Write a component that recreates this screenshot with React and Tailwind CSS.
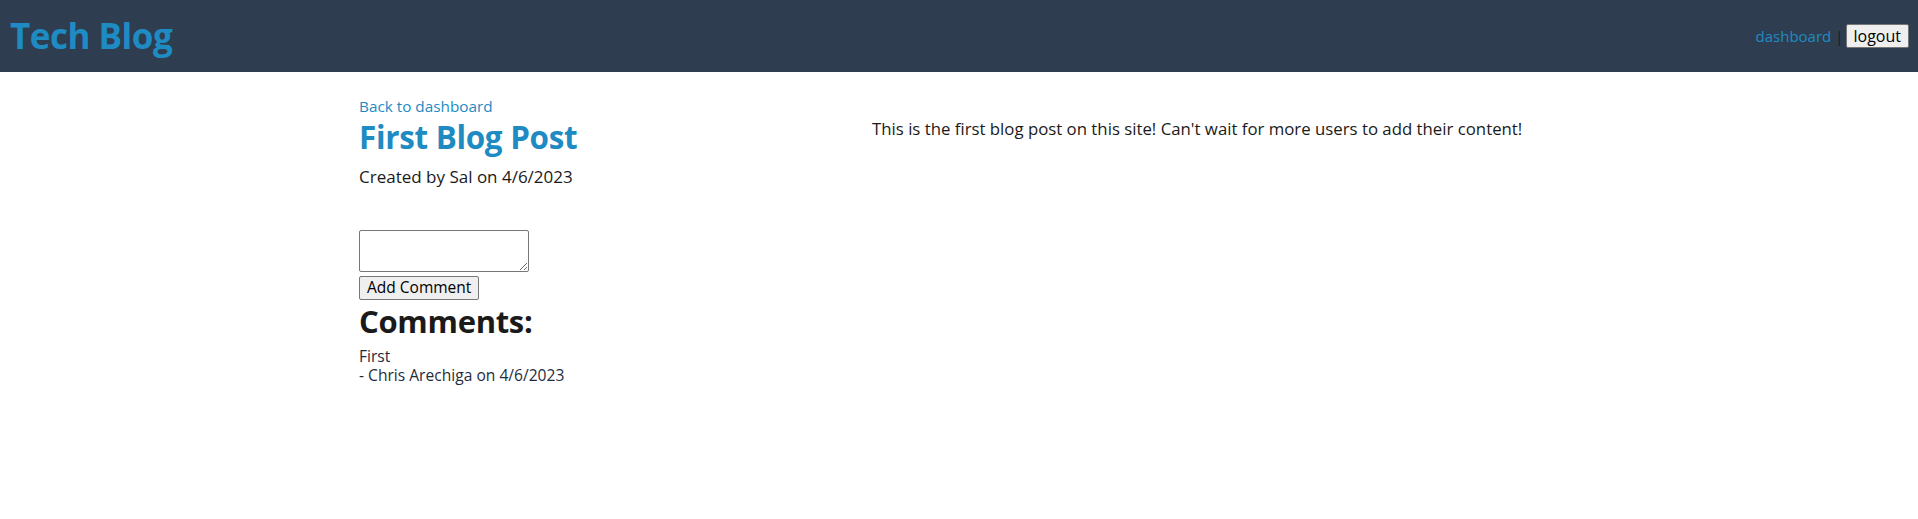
export default function App() {
  const font = { fontFamily: '"Open Sans", "Noto Sans", sans-serif' };
  return (
    <div className="min-h-[519px] bg-white text-[#1a1a1a]" style={font}>
      <header className="h-[72px] bg-[#2e3e50] flex items-center justify-between pl-[10px] pr-[9px]">
        <h1 className="text-[35px] font-bold text-[#1e8bc3] leading-none tracking-[-0.5px] -mt-[2px]">Tech Blog</h1>
        <nav className="flex items-center text-[15px]">
          <a className="text-[#1e8bc3]" href="#">dashboard</a>
          <span className="text-[#1a1a1a] ml-[4px] mr-[2px]">|</span>
          <button className="h-[24px] px-[7px] text-[16px] leading-none text-black bg-[#efefef] border border-[#767676] rounded-[2px]">logout</button>
        </nav>
      </header>
      <main className="w-[1200px] mx-auto flex">
        <section className="w-[513px] pt-[24px]">
          <a className="block text-[15.3px] leading-[20px] text-[#1e8bc3]" href="#">Back to dashboard</a>
          <h2 className="mt-[2px] text-[31.4px] font-bold leading-[38px] text-[#1e8bc3] tracking-[-0.3px]">First Blog Post</h2>
          <p className="mt-[10px] text-[17px] leading-[22px]">Created by Sal on 4/6/2023</p>
          <form className="mt-[42px] flex flex-col items-start gap-[4px]">
            <textarea className="w-[170px] h-[42px] border border-[#767676] rounded-[2px] bg-white" />
            <button type="button" className="h-[24px] px-[7px] text-[15.5px] leading-none text-black bg-[#efefef] border border-[#767676] rounded-[2px]">Add Comment</button>
          </form>
          <h3 className="mt-[2px] text-[31px] font-bold leading-[38px] text-[#1a1a1a] tracking-[-0.3px]">Comments:</h3>
          <div className="mt-[7px] text-[15.6px] leading-[19px] text-[#1f2d3d]">
            <p>First</p>
            <p>- Chris Arechiga on 4/6/2023</p>
          </div>
        </section>
        <section className="pt-[47px]">
          <p className="text-[16.8px] leading-[20px]">This is the first blog post on this site! Can't wait for more users to add their content!</p>
        </section>
      </main>
    </div>
  );
}
